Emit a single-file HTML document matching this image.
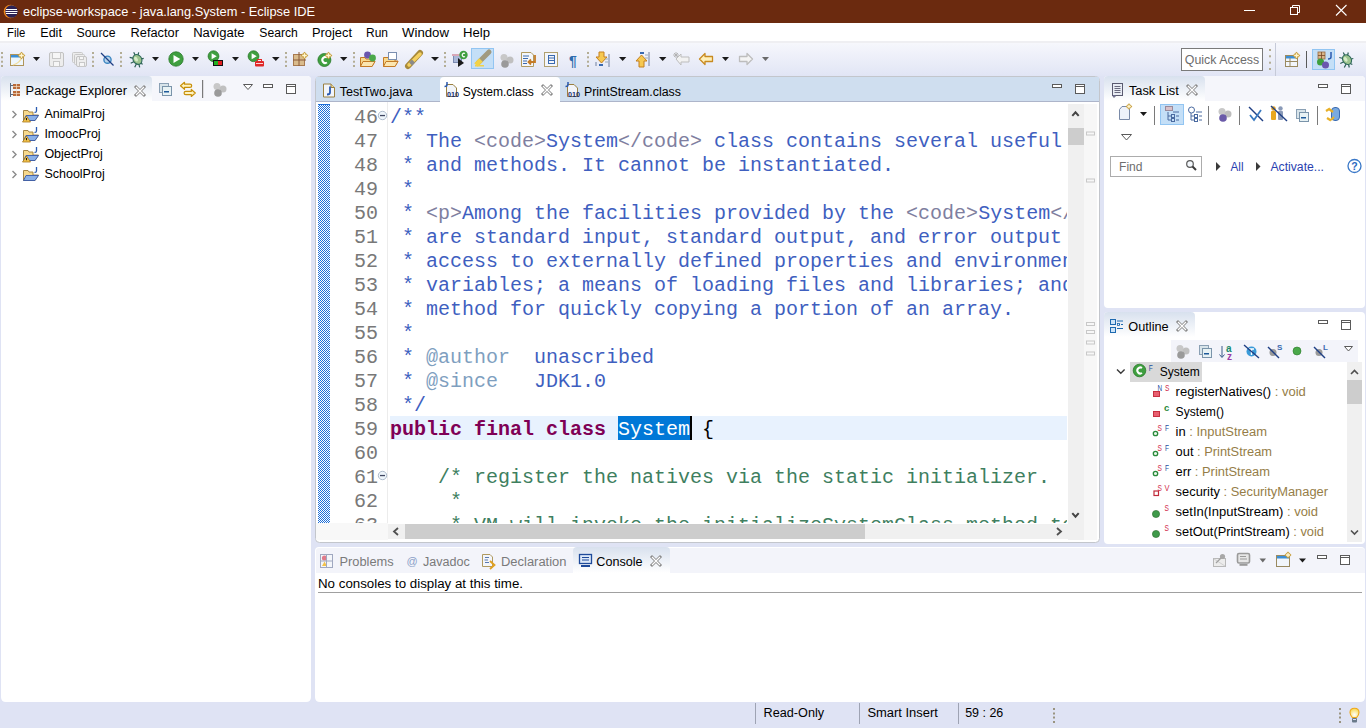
<!DOCTYPE html><html><head><meta charset="utf-8"><style>
html,body{margin:0;padding:0;width:1366px;height:728px;overflow:hidden;background:#dfe3f4}
svg text{white-space:pre}
svg{display:block;font-family:"Liberation Sans",sans-serif}
.mono{font-family:"Liberation Mono",monospace}
</style></head><body>
<svg width="1366" height="728" viewBox="0 0 1366 728" xml:space="preserve">
<defs>
<linearGradient id="tb" x1="0" y1="0" x2="0" y2="1"><stop offset="0" stop-color="#f6f7fc"/><stop offset="1" stop-color="#e1e5f5"/></linearGradient>
<linearGradient id="tabg" x1="0" y1="0" x2="0" y2="1"><stop offset="0" stop-color="#d8e1ee"/><stop offset="1" stop-color="#ffffff"/></linearGradient>
<clipPath id="edclip"><rect x="388" y="102" width="679" height="421"/></clipPath>
<clipPath id="lnclip"><rect x="316" y="102" width="72" height="421"/></clipPath>
<pattern id="chk" width="2" height="2" patternUnits="userSpaceOnUse"><rect width="2" height="2" fill="#ffffff"/><rect width="1" height="1" fill="#1e6fd9"/><rect x="1" y="1" width="1" height="1" fill="#1e6fd9"/></pattern>
</defs>

<rect x="0" y="0" width="1366" height="728" fill="#dfe3f4" />
<rect x="0" y="0" width="1366" height="23" fill="#6b2a0f" />
<text x="23" y="15.9" font-size="13.5" fill="#ffffff" textLength="292" lengthAdjust="spacingAndGlyphs" >eclipse-workspace - java.lang.System - Eclipse IDE</text>
<rect x="0" y="23" width="1366" height="18" fill="#ffffff" />
<rect x="0" y="41" width="1366" height="2" fill="#efeff2" />
<text x="7" y="37" font-size="12.5" fill="#000" textLength="18.3" lengthAdjust="spacingAndGlyphs" >File</text>
<text x="40.3" y="37" font-size="12.5" fill="#000" textLength="21.6" lengthAdjust="spacingAndGlyphs" >Edit</text>
<text x="76.5" y="37" font-size="12.5" fill="#000" textLength="39" lengthAdjust="spacingAndGlyphs" >Source</text>
<text x="130.6" y="37" font-size="12.5" fill="#000" textLength="48.3" lengthAdjust="spacingAndGlyphs" >Refactor</text>
<text x="193.2" y="37" font-size="12.5" fill="#000" textLength="51.4" lengthAdjust="spacingAndGlyphs" >Navigate</text>
<text x="259.3" y="37" font-size="12.5" fill="#000" textLength="38.5" lengthAdjust="spacingAndGlyphs" >Search</text>
<text x="312" y="37" font-size="12.5" fill="#000" textLength="40" lengthAdjust="spacingAndGlyphs" >Project</text>
<text x="366" y="37" font-size="12.5" fill="#000" textLength="22" lengthAdjust="spacingAndGlyphs" >Run</text>
<text x="402" y="37" font-size="12.5" fill="#000" textLength="47" lengthAdjust="spacingAndGlyphs" >Window</text>
<text x="463" y="37" font-size="12.5" fill="#000" textLength="27" lengthAdjust="spacingAndGlyphs" >Help</text>
<rect x="0" y="43" width="1366" height="33" fill="url(#tb)" />
<path d="M1,80 Q1,76 5,76 L307,76 Q311,76 311,80 L311,697 Q311,702 306,702 L6,702 Q1,702 1,697 Z" fill="#ffffff"/>
<path d="M1,101 L1,80 Q1,76 5,76 L307,76 Q311,76 311,80 L311,101 Z" fill="#f5f6fb"/>
<path d="M1,101 L1,80 Q1,76 5,76 L148,76 Q152,76 152,80 L152,101 Z" fill="url(#tabg)"/>
<text x="25.6" y="95" font-size="12.5" fill="#000" textLength="101.4" lengthAdjust="spacingAndGlyphs" >Package Explorer</text>
<text x="44.4" y="118" font-size="12.5" fill="#000" textLength="60.435546875" lengthAdjust="spacingAndGlyphs" >AnimalProj</text>
<text x="44.4" y="138" font-size="12.5" fill="#000" textLength="56.265625" lengthAdjust="spacingAndGlyphs" >ImoocProj</text>
<text x="44.4" y="158" font-size="12.5" fill="#000" textLength="58.353515625" lengthAdjust="spacingAndGlyphs" >ObjectProj</text>
<text x="44.4" y="178" font-size="12.5" fill="#000" textLength="60.447265625" lengthAdjust="spacingAndGlyphs" >SchoolProj</text>
<path d="M315.5,80.5 Q315.5,76.5 319.5,76.5 L1095.5,76.5 Q1099.5,76.5 1099.5,80.5 L1099.5,538.5 Q1099.5,542.5 1095.5,542.5 L319.5,542.5 Q315.5,542.5 315.5,538.5 Z" fill="#ffffff" stroke="#c3c6cc" stroke-width="1"/>
<rect x="316" y="77" width="783" height="24" fill="#cfdeef" />
<rect x="316" y="101" width="783" height="1" fill="#adb5ca" />
<path d="M440,102 L440,81 Q440,77 444,77 L556,77 Q560,77 560,81 L560,102 Z" fill="#ffffff"/>
<text x="339.8" y="96" font-size="12.5" fill="#000" textLength="72.7" lengthAdjust="spacingAndGlyphs" >TestTwo.java</text>
<text x="462.8" y="96" font-size="12.5" fill="#000" textLength="71" lengthAdjust="spacingAndGlyphs" >System.class</text>
<text x="584" y="96" font-size="12.5" fill="#000" textLength="96.9" lengthAdjust="spacingAndGlyphs" >PrintStream.class</text>
<rect x="318" y="104" width="12" height="419" fill="url(#chk)" />
<rect x="318" y="104" width="12" height="1" fill="#1e6fd9" />
<rect x="387" y="102" width="1" height="421" fill="#ececec" />
<rect x="390" y="416" width="677" height="24" fill="#e8f2fe" />
<rect x="618" y="416" width="72" height="24" fill="#0078d7" />
<rect x="690" y="416" width="2" height="24" fill="#000000" />
<g clip-path="url(#edclip)" class="mono" font-size="20" style="font-family:'Liberation Mono',monospace">
<text x="390" y="123" xml:space="preserve"><tspan fill="#3f5fbf">/**</tspan></text>
<text x="390" y="147" xml:space="preserve"><tspan fill="#3f5fbf"> * The </tspan><tspan fill="#7f7f9f">&lt;code&gt;</tspan><tspan fill="#3f5fbf">System</tspan><tspan fill="#7f7f9f">&lt;/code&gt;</tspan><tspan fill="#3f5fbf"> class contains several useful class fields</tspan></text>
<text x="390" y="171" xml:space="preserve"><tspan fill="#3f5fbf"> * and methods. It cannot be instantiated.</tspan></text>
<text x="390" y="195" xml:space="preserve"><tspan fill="#3f5fbf"> *</tspan></text>
<text x="390" y="219" xml:space="preserve"><tspan fill="#3f5fbf"> * </tspan><tspan fill="#7f7f9f">&lt;p&gt;</tspan><tspan fill="#3f5fbf">Among the facilities provided by the </tspan><tspan fill="#7f7f9f">&lt;code&gt;</tspan><tspan fill="#3f5fbf">System</tspan><tspan fill="#7f7f9f">&lt;/code&gt;</tspan><tspan fill="#3f5fbf"> class</tspan></text>
<text x="390" y="243" xml:space="preserve"><tspan fill="#3f5fbf"> * are standard input, standard output, and error output streams;</tspan></text>
<text x="390" y="267" xml:space="preserve"><tspan fill="#3f5fbf"> * access to externally defined properties and environment</tspan></text>
<text x="390" y="291" xml:space="preserve"><tspan fill="#3f5fbf"> * variables; a means of loading files and libraries; and a utility</tspan></text>
<text x="390" y="315" xml:space="preserve"><tspan fill="#3f5fbf"> * method for quickly copying a portion of an array.</tspan></text>
<text x="390" y="339" xml:space="preserve"><tspan fill="#3f5fbf"> *</tspan></text>
<text x="390" y="363" xml:space="preserve"><tspan fill="#3f5fbf"> * </tspan><tspan fill="#7f9fbf">@author</tspan><tspan fill="#3f5fbf">  unascribed</tspan></text>
<text x="390" y="387" xml:space="preserve"><tspan fill="#3f5fbf"> * </tspan><tspan fill="#7f9fbf">@since</tspan><tspan fill="#3f5fbf">   JDK1.0</tspan></text>
<text x="390" y="411" xml:space="preserve"><tspan fill="#3f5fbf"> */</tspan></text>
<text x="390" y="435" xml:space="preserve"><tspan fill="#7f0055" font-weight="bold">public final class</tspan><tspan fill="#000"> </tspan><tspan fill="#ffffff">System</tspan><tspan fill="#000"> {</tspan></text>
<text x="390" y="459" xml:space="preserve"></text>
<text x="390" y="483" xml:space="preserve"><tspan fill="#3f7f5f">    /* register the natives via the static initializer.</tspan></text>
<text x="390" y="507" xml:space="preserve"><tspan fill="#3f7f5f">     *</tspan></text>
<text x="390" y="531" xml:space="preserve"><tspan fill="#3f7f5f">     * VM will invoke the initializeSystemClass method to complete</tspan></text>
</g>
<g clip-path="url(#lnclip)" style="font-family:'Liberation Mono',monospace" font-size="20" fill="#787878">
<text x="378" y="123" text-anchor="end">46</text>
<text x="378" y="147" text-anchor="end">47</text>
<text x="378" y="171" text-anchor="end">48</text>
<text x="378" y="195" text-anchor="end">49</text>
<text x="378" y="219" text-anchor="end">50</text>
<text x="378" y="243" text-anchor="end">51</text>
<text x="378" y="267" text-anchor="end">52</text>
<text x="378" y="291" text-anchor="end">53</text>
<text x="378" y="315" text-anchor="end">54</text>
<text x="378" y="339" text-anchor="end">55</text>
<text x="378" y="363" text-anchor="end">56</text>
<text x="378" y="387" text-anchor="end">57</text>
<text x="378" y="411" text-anchor="end">58</text>
<text x="378" y="435" text-anchor="end">59</text>
<text x="378" y="459" text-anchor="end">60</text>
<text x="378" y="483" text-anchor="end">61</text>
<text x="378" y="507" text-anchor="end">62</text>
<text x="378" y="531" text-anchor="end">63</text>
</g>
<path d="M1104,80 Q1104,76 1108,76 L1361,76 Q1365,76 1365,80 L1365,304 Q1365,308 1361,308 L1108,308 Q1104,308 1104,304 Z" fill="#ffffff"/>
<path d="M1104,101 L1104,80 Q1104,76 1108,76 L1361,76 Q1365,76 1365,80 L1365,101 Z" fill="#f5f6fb"/>
<path d="M1104,101 L1104,80 Q1104,76 1108,76 L1201,76 Q1205,76 1205,80 L1205,101 Z" fill="url(#tabg)"/>
<text x="1128.9" y="95" font-size="12.5" fill="#000" textLength="49.9" lengthAdjust="spacingAndGlyphs" >Task List</text>
<path d="M1104,316 Q1104,312 1108,312 L1361,312 Q1365,312 1365,316 L1365,540 Q1365,544 1361,544 L1108,544 Q1104,544 1104,540 Z" fill="#ffffff"/>
<path d="M1104,337 L1104,316 Q1104,312 1108,312 L1191,312 Q1195,312 1195,316 L1195,337 Z" fill="url(#tabg)"/>
<text x="1128.3" y="331" font-size="12.5" fill="#000" textLength="40.4" lengthAdjust="spacingAndGlyphs" >Outline</text>
<path d="M315,551 Q315,547 319,547 L1361,547 Q1365,547 1365,551 L1365,697 Q1365,702 1360,702 L320,702 Q315,702 315,697 Z" fill="#ffffff"/>
<path d="M316,573 L316,551 Q316,548 319,548 L1362,548 Q1365,548 1365,551 L1365,573 Z" fill="#f3f4fa"/>
<path d="M573,573 L573,551 Q573,547 577,547 L666,547 Q670,547 670,551 L670,573 Z" fill="url(#tabg)"/>
<text x="339.5" y="566" font-size="12.5" fill="#7a7a7a" textLength="54.2" lengthAdjust="spacingAndGlyphs" >Problems</text>
<text x="423" y="566" font-size="12.5" fill="#7a7a7a" textLength="46.8" lengthAdjust="spacingAndGlyphs" >Javadoc</text>
<text x="501" y="566" font-size="12.5" fill="#7a7a7a" textLength="65.5" lengthAdjust="spacingAndGlyphs" >Declaration</text>
<text x="596.3" y="566" font-size="12.5" fill="#000" textLength="46.3" lengthAdjust="spacingAndGlyphs" >Console</text>
<text x="318" y="588" font-size="12.5" fill="#000" textLength="205" lengthAdjust="spacingAndGlyphs" >No consoles to display at this time.</text>
<rect x="318" y="592" width="1044" height="1" fill="#a0a0a0" />
<rect x="755" y="703" width="1" height="21" fill="#9ea3b3" />
<rect x="859" y="703" width="1" height="21" fill="#9ea3b3" />
<rect x="958" y="703" width="1" height="21" fill="#9ea3b3" />
<text x="763.6" y="717.4" font-size="12.5" fill="#000" textLength="60.5" lengthAdjust="spacingAndGlyphs" >Read-Only</text>
<text x="867.4" y="717.4" font-size="12.5" fill="#000" textLength="70.5" lengthAdjust="spacingAndGlyphs" >Smart Insert</text>
<text x="965.2" y="717.4" font-size="12.5" fill="#000" textLength="38.1" lengthAdjust="spacingAndGlyphs" >59 : 26</text>
<rect x="1" y="52.0" width="2" height="2" fill="#b3ad94" />
<rect x="1" y="56.3" width="2" height="2" fill="#b3ad94" />
<rect x="1" y="60.7" width="2" height="2" fill="#b3ad94" />
<rect x="1" y="65.0" width="2" height="2" fill="#b3ad94" />
<rect x="10.5" y="54.5" width="13" height="11" fill="#eef6fc" stroke="#b0955a"/>
<rect x="11" y="55" width="12" height="2.5" fill="#3d8fd6" />
<path d="M13,65 Q20,63 22,57" stroke="#f0dc9a" stroke-width="1.2" fill="none"/>
<path d="M21.5,51.7 L25.3,55.5 L21.5,59.3 L17.7,55.5 Z" fill="#c8a040"/>
<path d="M21.5,53.2 L21.5,57.8 M19.2,55.5 L23.8,55.5" stroke="#fff6d0" stroke-width="1.3"/>
<path d="M33,57 L40,57 L36.5,61 Z" fill="#1a1a1a"/>
<rect x="49.5" y="52.5" width="14" height="14" rx="1.5" fill="#ededed" stroke="#c2c2c2"/>
<rect x="52.5" y="52.5" width="8" height="6" fill="#f6f6f6" stroke="#c8c8c8"/>
<rect x="53.5" y="61.5" width="6" height="5" fill="#f6f6f6" stroke="#c8c8c8"/>
<rect x="72.5" y="52.5" width="10" height="10" rx="1" fill="#ededed" stroke="#c8c8c8"/>
<rect x="74.5" y="54.5" width="10" height="10" rx="1" fill="#ededed" stroke="#c8c8c8"/>
<rect x="76.5" y="56.5" width="10" height="10" rx="1.5" fill="#ededed" stroke="#c2c2c2"/><rect x="79.5" y="56.5" width="4" height="3" fill="#f6f6f6" stroke="#c8c8c8"/><rect x="79.5" y="62.5" width="5" height="4" fill="#f6f6f6" stroke="#c8c8c8"/>
<rect x="92" y="52.0" width="2" height="2" fill="#b3ad94" />
<rect x="92" y="56.3" width="2" height="2" fill="#b3ad94" />
<rect x="92" y="60.7" width="2" height="2" fill="#b3ad94" />
<rect x="92" y="65.0" width="2" height="2" fill="#b3ad94" />
<circle cx="107.5" cy="59.7" r="3.6" fill="#b8d4ea" stroke="#3c86c2" stroke-width="1.4"/>
<path d="M101,53 L113.5,65.5" stroke="#1f3f84" stroke-width="1.3"/>
<rect x="120" y="52.0" width="2" height="2" fill="#b3ad94" />
<rect x="120" y="56.3" width="2" height="2" fill="#b3ad94" />
<rect x="120" y="60.7" width="2" height="2" fill="#b3ad94" />
<rect x="120" y="65.0" width="2" height="2" fill="#b3ad94" />
<g stroke="#2b5e55" stroke-width="1.2" fill="none"><path d="M129.7,57.3 L133.7,58.3 M130.7,63.3 L134.7,61.3 M133.7,52.3 L135.7,56.3 M138.7,52.3 L137.7,56.3 M143.7,58.3 L139.7,59.3 M142.7,64.3 L138.7,62.3 M134.7,67.3 L136.7,63.3 M139.7,67.3 L138.7,63.3"/></g>
<ellipse cx="137.2" cy="59.8" rx="4.2" ry="5.2" transform="rotate(-35 136.7 59.3)" fill="#9cc48e" stroke="#2f6a5a" stroke-width="1.1"/>
<ellipse cx="136.2" cy="58.8" rx="1.6" ry="2.6" transform="rotate(-35 136.7 59.3)" fill="#d6ecc8"/>
<path d="M152,57 L159,57 L155.5,61 Z" fill="#1a1a1a"/>
<circle cx="176" cy="59" r="7.2" fill="#3f9f3f" stroke="#2a7a2a" stroke-width="0.8"/>
<path d="M173.48,55.04 L180.32,59 L173.48,62.96 Z" fill="#ffffff"/>
<path d="M192,57 L199,57 L195.5,61 Z" fill="#1a1a1a"/>
<circle cx="213.5" cy="56.2" r="5.4" fill="#3f9f3f" stroke="#2a7a2a" stroke-width="0.8"/>
<path d="M211.61,53.230000000000004 L216.74,56.2 L211.61,59.17 Z" fill="#ffffff"/>
<rect x="213" y="60" width="10" height="6" fill="#111111" />
<rect x="214" y="61" width="4" height="4" fill="#22b022" />
<rect x="218" y="61" width="4" height="4" fill="#e02020" />
<path d="M232,57 L239,57 L235.5,61 Z" fill="#1a1a1a"/>
<circle cx="253.5" cy="56.2" r="5.4" fill="#3f9f3f" stroke="#2a7a2a" stroke-width="0.8"/>
<path d="M251.61,53.230000000000004 L256.74,56.2 L251.61,59.17 Z" fill="#ffffff"/>
<rect x="255" y="61" width="9" height="5.5" rx="1" fill="#e02828"/><rect x="257.5" y="59.5" width="4" height="2" fill="none" stroke="#e02828"/>
<rect x="256" y="63" width="7" height="0.8" fill="#ffffff" />
<path d="M272,57 L279.6,57 L275.8,61 Z" fill="#1a1a1a"/>
<rect x="285" y="52.0" width="2" height="2" fill="#b3ad94" />
<rect x="285" y="56.3" width="2" height="2" fill="#b3ad94" />
<rect x="285" y="60.7" width="2" height="2" fill="#b3ad94" />
<rect x="285" y="65.0" width="2" height="2" fill="#b3ad94" />
<rect x="293.5" y="54.5" width="11" height="11" fill="#d9bb8c" stroke="#a87a50"/>
<path d="M299,52 L299,66 M293,60 L306,60" stroke="#8a5a3a" stroke-width="1"/>
<path d="M304.5,51.7 L308.3,55.5 L304.5,59.3 L300.7,55.5 Z" fill="#c8a040"/>
<path d="M304.5,53.2 L304.5,57.8 M302.2,55.5 L306.8,55.5" stroke="#fff6d0" stroke-width="1.3"/>
<circle cx="324.4" cy="60" r="6.5" fill="#3f9f3f" stroke="#2a7a2a" stroke-width="0.8"/>
<path d="M327,57.5 A3,3 0 1 0 327,62.5" stroke="#ffffff" stroke-width="2" fill="none"/>
<path d="M328.5,51.7 L332.3,55.5 L328.5,59.3 L324.7,55.5 Z" fill="#c8a040"/>
<path d="M328.5,53.2 L328.5,57.8 M326.2,55.5 L330.8,55.5" stroke="#fff6d0" stroke-width="1.3"/>
<path d="M340,57 L347.4,57 L343.7,61 Z" fill="#1a1a1a"/>
<rect x="353" y="52.0" width="2" height="2" fill="#b3ad94" />
<rect x="353" y="56.3" width="2" height="2" fill="#b3ad94" />
<rect x="353" y="60.7" width="2" height="2" fill="#b3ad94" />
<rect x="353" y="65.0" width="2" height="2" fill="#b3ad94" />
<path d="M360.5,57.5 L365,57.5 L366,59 L372,59 L372,61 L375,61 L372,66.5 L360.5,66.5 Z" fill="#f7d98e" stroke="#c47b26"/>
<path d="M363,61.5 L375,61.5 L372,66.5 L360.5,66.5 Z" fill="#fbe6b0" stroke="#c47b26"/>
<circle cx="367.5" cy="55" r="3.4" fill="#6a56ae"/><circle cx="372.5" cy="58" r="3.4" fill="#4aa84a"/>
<path d="M383.5,57.5 L388,57.5 L389,59 L395,59 L395,61 L398,61 L395,66.5 L383.5,66.5 Z" fill="#f7d98e" stroke="#c47b26"/>
<path d="M386,61.5 L398,61.5 L395,66.5 L383.5,66.5 Z" fill="#fbe6b0" stroke="#c47b26"/>
<rect x="388.5" y="52.5" width="8" height="7" fill="#ffffff" stroke="#7a8eb0"/>
<path d="M408,66 L420,53" stroke="#a88a3a" stroke-width="6" stroke-linecap="round"/>
<path d="M409,65 L420,54" stroke="#f4d060" stroke-width="3.5" stroke-linecap="round"/>
<path d="M410.5,61 L413.5,64" stroke="#8a8a8a" stroke-width="4"/>
<path d="M431,57 L439,57 L435.0,61 Z" fill="#1a1a1a"/>
<rect x="444" y="52.0" width="2" height="2" fill="#b3ad94" />
<rect x="444" y="56.3" width="2" height="2" fill="#b3ad94" />
<rect x="444" y="60.7" width="2" height="2" fill="#b3ad94" />
<rect x="444" y="65.0" width="2" height="2" fill="#b3ad94" />
<rect x="453.5" y="55.5" width="8" height="7" fill="#aab8d8" stroke="#7a8ab0"/><rect x="452" y="54" width="11" height="2" fill="#d8a8b8"/>
<path d="M458,58 L464,63 L458,67 Z" fill="#1a1a1a"/>
<circle cx="463.5" cy="55" r="4.2" fill="#3f9f3f"/><path d="M465,53.5 A1.8,1.8 0 1 0 465,56.5" stroke="#fff" stroke-width="1.2" fill="none"/>
<rect x="471.5" y="48.5" width="22" height="20" fill="#c4dff7" stroke="#92c5f2"/>
<path d="M478,63 L489,52" stroke="#a09a80" stroke-width="5" stroke-linecap="round"/>
<path d="M476,65 L481,60" stroke="#f2d248" stroke-width="5"/>
<rect x="475" y="65" width="9" height="1.5" fill="#f2d248" />
<circle cx="504" cy="57.5" r="3.5" fill="#c8c8c8"/><circle cx="510" cy="60" r="3.5" fill="#c0c0c0"/><circle cx="505" cy="64" r="3.8" fill="#9a9a9a"/>
<path d="M521.5,52.5 L531,52.5 L533.5,55 L533.5,66.5 L521.5,66.5 Z" fill="#f4f6fa" stroke="#b09a60"/>
<path d="M523,56 L529,56 M523,58.5 L528,58.5 M523,61 L527,61 M523,63.5 L527,63.5" stroke="#3a6ab0" stroke-width="1"/>
<path d="M535,55 L535,62 L529,62 M531,59.5 L528.5,62 L531,64.5" stroke="#c47b26" stroke-width="1.8" fill="none"/>
<rect x="544.5" y="52.5" width="13" height="14" fill="#f4f6fa" stroke="#b0a070"/><rect x="548.5" y="55.5" width="6" height="8" fill="none" stroke="#3a6ab0"/><path d="M549,58 L554,58 M549,60.5 L554,60.5" stroke="#3a6ab0"/>
<text x="569" y="66" font-size="14" fill="#2d6cae" font-weight="bold">¶</text>
<rect x="587" y="52.0" width="2" height="2" fill="#b3ad94" />
<rect x="587" y="56.3" width="2" height="2" fill="#b3ad94" />
<rect x="587" y="60.7" width="2" height="2" fill="#b3ad94" />
<rect x="587" y="65.0" width="2" height="2" fill="#b3ad94" />
<path d="M599,52 L604,52 L604,57 L607,57 L601.5,63 L596,57 L599,57 Z" fill="#f6c850" stroke="#c48020"/>
<path d="M596,62 L596,66 M609,54 L609,67" stroke="#7080a0" stroke-width="1"/><rect x="599" y="64" width="4" height="2" fill="#3a6ab0"/><path d="M605,59 L608,59 M605,62 L608,62" stroke="#9ab"/>
<path d="M619,57 L626.3,57 L622.65,61 Z" fill="#1a1a1a"/>
<path d="M639,67 L644,67 L644,61 L647,61 L641.5,55 L636,61 L639,61 Z" fill="#f6c850" stroke="#c48020"/>
<path d="M649,52 L649,66" stroke="#7080a0"/><rect x="640" y="52" width="4" height="2" fill="#3a6ab0"/><path d="M645,55 L648,55 M645,58 L648,58" stroke="#9ab"/>
<path d="M659,57 L666.4,57 L662.7,61 Z" fill="#1a1a1a"/>
<path d="M676,59 L681,54 L681,57 L689,57 L689,62 L681,62 L681,65 Z" fill="#f2f2f2" stroke="#bdbdbd"/>
<path d="M674,53 L678,57 M678,53 L674,57 M676,52 L676,58 M673,55 L679,55" stroke="#b0b0b0" stroke-width="0.9"/>
<path d="M699.5,59 L705,53.5 L705,56.5 L712.5,56.5 L712.5,61.5 L705,61.5 L705,64.5 Z" fill="#fff0b8" stroke="#c88a20" stroke-width="1.3" stroke-linejoin="round"/>
<path d="M722,57 L729,57 L725.5,61 Z" fill="#1a1a1a"/>
<path d="M752.5,59 L747,53.5 L747,56.5 L739.5,56.5 L739.5,61.5 L747,61.5 L747,64.5 Z" fill="#f4f4f4" stroke="#bdbdbd" stroke-width="1.3" stroke-linejoin="round"/>
<path d="M762,57 L769,57 L765.5,61 Z" fill="#6a6a6a"/>
<rect x="1181.5" y="48.5" width="81" height="22" fill="#ffffff" stroke="#7a7a7a"/>
<text x="1184.8" y="63.5" font-size="12.5" fill="#6d6d6d" textLength="74.4" lengthAdjust="spacingAndGlyphs" >Quick Access</text>
<rect x="1269" y="49.0" width="2" height="2" fill="#b3ad94" />
<rect x="1269" y="55.3" width="2" height="2" fill="#b3ad94" />
<rect x="1269" y="61.7" width="2" height="2" fill="#b3ad94" />
<rect x="1269" y="68.0" width="2" height="2" fill="#b3ad94" />
<rect x="1275" y="43" width="1" height="33" fill="#c6cad8" />
<rect x="1285.5" y="55.5" width="12" height="11" fill="#f2f6fb" stroke="#9a8a60"/><rect x="1286" y="56" width="11" height="2.5" fill="#3d8fd6"/><path d="M1290,58 L1290,66 M1286,61.5 L1297,61.5" stroke="#9a8a60"/>
<path d="M1296.5,51.7 L1300.3,55.5 L1296.5,59.3 L1292.7,55.5 Z" fill="#c8a040"/>
<path d="M1296.5,53.2 L1296.5,57.8 M1294.2,55.5 L1298.8,55.5" stroke="#fff6d0" stroke-width="1.3"/>
<rect x="1306" y="51" width="1" height="17" fill="#5a5a5a" />
<rect x="1312.5" y="49.5" width="22" height="20" fill="#c4dff7" stroke="#92c5f2"/>
<rect x="1318" y="52" width="7" height="7" fill="#d8b68a" stroke="#9a6a40" stroke-width="0.8"/><path d="M1321.5,52 L1321.5,59 M1318,55.5 L1325,55.5" stroke="#7a4a2a" stroke-width="0.8"/>
<path d="M1331,52 L1331,57 Q1331,59 1328,59" stroke="#2a5ab0" stroke-width="1.5" fill="none"/>
<circle cx="1320.5" cy="62" r="3.5" fill="#3f9f3f"/><circle cx="1325.5" cy="65" r="3.5" fill="#6a56ae"/>
<g stroke="#2b5e55" stroke-width="1.2" fill="none"><path d="M1339.3,57.5 L1343.3,58.5 M1340.3,63.5 L1344.3,61.5 M1343.3,52.5 L1345.3,56.5 M1348.3,52.5 L1347.3,56.5 M1353.3,58.5 L1349.3,59.5 M1352.3,64.5 L1348.3,62.5 M1344.3,67.5 L1346.3,63.5 M1349.3,67.5 L1348.3,63.5"/></g>
<ellipse cx="1346.8" cy="60.0" rx="4.2" ry="5.2" transform="rotate(-35 1346.3 59.5)" fill="#9cc48e" stroke="#2f6a5a" stroke-width="1.1"/>
<ellipse cx="1345.8" cy="59.0" rx="1.6" ry="2.6" transform="rotate(-35 1346.3 59.5)" fill="#d6ecc8"/>
<circle cx="10.5" cy="11.5" r="6.8" fill="#f08a1c"/><circle cx="11.5" cy="11.5" r="6.3" fill="#2c2255"/>
<path d="M6,9.5 L17,9.5 M5.5,11.5 L17.5,11.5 M6,13.5 L17,13.5" stroke="#ffffff" stroke-width="1"/>
<rect x="1244" y="10" width="11" height="1" fill="#ffffff" />
<rect x="1290.5" y="7.5" width="7" height="7" fill="none" stroke="#ffffff"/><path d="M1292.5,7.5 L1292.5,5.5 L1299.5,5.5 L1299.5,12.5 L1297.5,12.5" fill="none" stroke="#ffffff"/>
<path d="M1336,5 L1346.5,15.5 M1346.5,5 L1336,15.5" stroke="#ffffff" stroke-width="1.1"/>
<path d="M10.5,83 L10.5,97 M10.5,85.5 L13,85.5 M10.5,94.5 L13,94.5" stroke="#5a6a80" stroke-width="1" fill="none"/>
<rect x="13" y="84" width="7" height="5" fill="#b86a3a"/><rect x="13" y="91" width="7" height="5" fill="#b86a3a"/><path d="M16.5,84 L16.5,96 M13,86.5 L20,86.5 M13,93.5 L20,93.5" stroke="#f4e0c8" stroke-width="0.7"/>
<path d="M136,87 L144,95 M144,87 L136,95" stroke="#8a8a8a" stroke-width="3" stroke-linecap="square"/>
<path d="M136,87 L144,95 M144,87 L136,95" stroke="#ffffff" stroke-width="1.2"/>
<rect x="159.5" y="83.5" width="9" height="9" fill="#d8e4ea" stroke="#8aa0b4"/>
<rect x="162.5" y="86.5" width="9" height="9" fill="#e8f2f4" stroke="#7a94aa"/>
<rect x="164" y="91" width="5" height="1.5" fill="#1e5a9a" />
<path d="M180.5,85.8 L184.5,82.3 L184.5,84.2 L190,84.2 Q191.7,84.2 191.7,85.8 Q191.7,87.4 190,87.4 L184.5,87.4 L184.5,89.3 Z" fill="#fff3c0" stroke="#c8900a" stroke-width="1.2" stroke-linejoin="round"/>
<path d="M195.3,93 L191.3,89.5 L191.3,91.4 L185.8,91.4 Q184.1,91.4 184.1,93 Q184.1,94.6 185.8,94.6 L191.3,94.6 L191.3,96.5 Z" fill="#fff3c0" stroke="#c8900a" stroke-width="1.2" stroke-linejoin="round"/>
<rect x="202" y="80" width="1.2" height="18" fill="#7a7a7a" />
<circle cx="217" cy="86.5" r="3.5" fill="#c8c8c8"/><circle cx="223" cy="89" r="3.5" fill="#c0c0c0"/><circle cx="218" cy="93" r="3.8" fill="#9a9a9a"/>
<path d="M243.5,84.5 L252.5,84.5 L248,89.5 Z" fill="#fff" stroke="#5a5a5a"/>
<rect x="263.5" y="84.5" width="9" height="3" fill="#fff" stroke="#5a5a5a" stroke-width="1"/>
<rect x="286.5" y="84.5" width="9" height="9" fill="#fff" stroke="#5a5a5a" stroke-width="1"/>
<rect x="287" y="86" width="9" height="1" fill="#5a5a5a"/>
<path d="M12.5,111 L16,114.5 L12.5,118" stroke="#8a8a8a" stroke-width="1.4" fill="none"/>
<path d="M23.5,110.5 L28,110.5 L29,112 L33,112 L33,115 L38.5,115 L35,120.5 L23.5,120.5 Z" fill="#f7d98e" stroke="#9a7a3a" stroke-width="0.9"/>
<path d="M26,115.5 L38.5,115.5 L35,120.5 L23.5,120.5 Z" fill="#8ab0e8" stroke="#3a5aa8" stroke-width="0.9"/>
<path d="M36.5,107 L36.5,111 Q36.5,112.5 34.5,112.5" stroke="#2a5ab0" stroke-width="1.3" fill="none"/>
<path d="M26.5,116 L30.5,122 L22.5,122 Z" fill="#f2c24a" stroke="#a87a20" stroke-width="0.8"/><rect x="26" y="118" width="1" height="2.2" fill="#1a1a1a"/>
<path d="M12.5,131 L16,134.5 L12.5,138" stroke="#8a8a8a" stroke-width="1.4" fill="none"/>
<path d="M23.5,130.5 L28,130.5 L29,132 L33,132 L33,135 L38.5,135 L35,140.5 L23.5,140.5 Z" fill="#f7d98e" stroke="#9a7a3a" stroke-width="0.9"/>
<path d="M26,135.5 L38.5,135.5 L35,140.5 L23.5,140.5 Z" fill="#8ab0e8" stroke="#3a5aa8" stroke-width="0.9"/>
<path d="M36.5,127 L36.5,131 Q36.5,132.5 34.5,132.5" stroke="#2a5ab0" stroke-width="1.3" fill="none"/>
<path d="M26.5,136 L30.5,142 L22.5,142 Z" fill="#f2c24a" stroke="#a87a20" stroke-width="0.8"/><rect x="26" y="138" width="1" height="2.2" fill="#1a1a1a"/>
<path d="M12.5,151 L16,154.5 L12.5,158" stroke="#8a8a8a" stroke-width="1.4" fill="none"/>
<path d="M23.5,150.5 L28,150.5 L29,152 L33,152 L33,155 L38.5,155 L35,160.5 L23.5,160.5 Z" fill="#f7d98e" stroke="#9a7a3a" stroke-width="0.9"/>
<path d="M26,155.5 L38.5,155.5 L35,160.5 L23.5,160.5 Z" fill="#8ab0e8" stroke="#3a5aa8" stroke-width="0.9"/>
<path d="M36.5,147 L36.5,151 Q36.5,152.5 34.5,152.5" stroke="#2a5ab0" stroke-width="1.3" fill="none"/>
<path d="M26.5,156 L30.5,162 L22.5,162 Z" fill="#f2c24a" stroke="#a87a20" stroke-width="0.8"/><rect x="26" y="158" width="1" height="2.2" fill="#1a1a1a"/>
<path d="M12.5,171 L16,174.5 L12.5,178" stroke="#8a8a8a" stroke-width="1.4" fill="none"/>
<path d="M23.5,170.5 L28,170.5 L29,172 L33,172 L33,175 L38.5,175 L35,180.5 L23.5,180.5 Z" fill="#f7d98e" stroke="#9a7a3a" stroke-width="0.9"/>
<path d="M26,175.5 L38.5,175.5 L35,180.5 L23.5,180.5 Z" fill="#8ab0e8" stroke="#3a5aa8" stroke-width="0.9"/>
<path d="M36.5,167 L36.5,171 Q36.5,172.5 34.5,172.5" stroke="#2a5ab0" stroke-width="1.3" fill="none"/>
<path d="M323.5,84.0 L331,84.0 L334.5,87.5 L334.5,97.0 L323.5,97.0 Z" fill="#f2f5fa" stroke="#9a8040"/>
<path d="M331,84.0 L331,87.5 L334.5,87.5" fill="#e8d8a0" stroke="#9a8040"/>
<path d="M330,86.5 L330,92.5 Q330,94.5 327,94.5" stroke="#2a5ab0" stroke-width="1.8" fill="none"/>
<path d="M446.5,84.5 L453,84.5 L456.5,88 L456.5,96.5 L446.5,96.5 Z" fill="#f2f5fa" stroke="#9a8040"/>
<path d="M447,82 L447,85 Q447,86.5 444.5,86.5" stroke="#2a5ab0" stroke-width="1.5" fill="none"/>
<text x="447" y="96.5" font-size="7.5" fill="#1a3070" font-weight="bold" textLength="12" lengthAdjust="spacingAndGlyphs">010</text>
<path d="M543,86 L551,94 M551,86 L543,94" stroke="#8a8a8a" stroke-width="3" stroke-linecap="square"/>
<path d="M543,86 L551,94 M551,86 L543,94" stroke="#ffffff" stroke-width="1.2"/>
<path d="M567.5,84.5 L574,84.5 L577.5,88 L577.5,96.5 L567.5,96.5 Z" fill="#f2f5fa" stroke="#9a8040"/>
<path d="M568,82 L568,85 Q568,86.5 565.5,86.5" stroke="#2a5ab0" stroke-width="1.5" fill="none"/>
<text x="568" y="96.5" font-size="7.5" fill="#1a3070" font-weight="bold" textLength="12" lengthAdjust="spacingAndGlyphs">010</text>
<rect x="1052.5" y="84.5" width="9" height="3" fill="#fff" stroke="#5a5a5a" stroke-width="1"/>
<rect x="1075.5" y="84.5" width="9" height="9" fill="#fff" stroke="#5a5a5a" stroke-width="1"/>
<rect x="1076" y="86" width="9" height="1" fill="#5a5a5a"/>
<circle cx="382.5" cy="115.5" r="4.2" fill="#eef5fb" stroke="#aebccc" stroke-width="1"/>
<rect x="380" y="114.9" width="5" height="1.3" fill="#3f4660" />
<circle cx="382.5" cy="475.5" r="4.2" fill="#eef5fb" stroke="#aebccc" stroke-width="1"/>
<rect x="380" y="474.9" width="5" height="1.3" fill="#3f4660" />
<rect x="1068" y="104" width="16" height="436" fill="#f0f0f0" />
<rect x="1068" y="128" width="16" height="17" fill="#cdcdcd" />
<path d="M1072.3,115.8 L1075.5,112.3 L1078.7,115.8" stroke="#454545" stroke-width="2" fill="none"/>
<path d="M1072.3,513.2 L1075.5,516.7 L1078.7,513.2" stroke="#454545" stroke-width="2" fill="none"/>
<rect x="1084" y="104" width="13" height="436" fill="#f7f7f7" />
<rect x="1086.5" y="132.0" width="8" height="3" fill="none" stroke="#c8c8c8"/>
<rect x="1086.5" y="179.0" width="8" height="3" fill="none" stroke="#c8c8c8"/>
<rect x="1086.5" y="322.5" width="8" height="3" fill="none" stroke="#c8c8c8"/>
<rect x="1086.5" y="330.5" width="8" height="3" fill="none" stroke="#c8c8c8"/>
<rect x="1086.5" y="341.0" width="8" height="3" fill="none" stroke="#c8c8c8"/>
<rect x="1086.5" y="352.0" width="8" height="3" fill="none" stroke="#c8c8c8"/>
<rect x="316" y="523" width="72" height="17" fill="#f8f8f8" />
<rect x="388" y="524" width="680" height="15" fill="#f0f0f0" />
<rect x="405" y="524" width="460" height="15" fill="#cdcdcd" />
<path d="M398,528 L394,531.5 L398,535" stroke="#505050" stroke-width="1.8" fill="none"/>
<path d="M1057,528 L1061,531.5 L1057,535" stroke="#505050" stroke-width="1.8" fill="none"/>
<rect x="1112.5" y="83.5" width="10" height="12" fill="#e8ecf4" stroke="#5a5a70"/><path d="M1114.5,86.5 L1120.5,86.5 M1114.5,88.5 L1120.5,88.5 M1114.5,90.5 L1120.5,90.5 M1114.5,92.5 L1120.5,92.5" stroke="#5a5a70" stroke-width="0.9"/><path d="M1112.5,95.5 L1114,97.5 L1116,95.5" fill="#7a7aa8" stroke="#5a5a70" stroke-width="0.8"/>
<path d="M1188,86 L1196,94 M1196,86 L1188,94" stroke="#8a8a8a" stroke-width="3" stroke-linecap="square"/>
<path d="M1188,86 L1196,94 M1196,86 L1188,94" stroke="#ffffff" stroke-width="1.2"/>
<rect x="1318.5" y="84.5" width="9" height="3" fill="#fff" stroke="#5a5a5a" stroke-width="1"/>
<rect x="1341.5" y="84.5" width="9" height="9" fill="#fff" stroke="#5a5a5a" stroke-width="1"/>
<rect x="1342" y="86" width="9" height="1" fill="#5a5a5a"/>
<path d="M1119.5,109.5 L1122,106.5 L1129.5,106.5 L1129.5,119.5 L1119.5,119.5 Z" fill="#eef2fa" stroke="#7a8aa8"/>
<path d="M1129,103.2 L1132.3,106.5 L1129,109.8 L1125.7,106.5 Z" fill="#c8a040"/>
<path d="M1129,104.7 L1129,108.3 M1127.2,106.5 L1130.8,106.5" stroke="#fff6d0" stroke-width="1.3"/>
<path d="M1140,112 L1147,112 L1143.5,116 Z" fill="#1a1a1a"/>
<rect x="1154" y="106" width="1" height="19" fill="#7a7a7a" />
<rect x="1160.5" y="104.5" width="23" height="20" fill="#c4dff7" stroke="#92c5f2"/>
<path d="M1168,112 L1168,120 L1171,120 M1168,116 L1171,116" stroke="#4a6aa0" fill="none"/>
<rect x="1171.5" y="114.5" width="3" height="3" fill="none" stroke="#4a6aa0"/><rect x="1171.5" y="118.5" width="3" height="3" fill="none" stroke="#4a6aa0"/>
<path d="M1176,116 L1179,116 M1176,120 L1179,120 M1173,112 L1179,112" stroke="#4a6aa0"/>
<rect x="1165.5" y="106.5" width="7" height="4" fill="#d8c0c8" stroke="#9a8a9a"/>
<path d="M1191,112 L1191,120 L1194,120 M1191,116 L1194,116" stroke="#4a6aa0" fill="none"/>
<rect x="1194.5" y="114.5" width="3" height="3" fill="none" stroke="#4a6aa0"/><rect x="1194.5" y="118.5" width="3" height="3" fill="none" stroke="#4a6aa0"/>
<path d="M1199,116 L1202,116 M1199,120 L1202,120 M1196,112 L1202,112" stroke="#4a6aa0"/>
<circle cx="1191.5" cy="110" r="3" fill="#fff" stroke="#4a6aa0"/>
<rect x="1208" y="106" width="1" height="19" fill="#7a7a7a" />
<circle cx="1222" cy="111.5" r="3.5" fill="#c8c8c8"/><circle cx="1228" cy="114" r="3.5" fill="#bdbdbd"/><circle cx="1223" cy="118" r="3.8" fill="#6a5aa8"/>
<rect x="1239" y="106" width="1" height="19" fill="#7a7a7a" />
<path d="M1249,107 L1263,121" stroke="#1f3f84" stroke-width="1.4"/><path d="M1250,115 L1254,120 L1261,110" stroke="#3a7ac0" stroke-width="1.8" fill="none"/>
<circle cx="1273.5" cy="108.5" r="2.2" fill="#e0a020"/><rect x="1271" y="111" width="5" height="9" rx="1" fill="#e8a820"/><circle cx="1280.5" cy="108.5" r="2.2" fill="#8a9ab8"/><rect x="1278" y="111" width="5" height="9" rx="1" fill="#8a9ab8"/><path d="M1271,106 L1287,121" stroke="#1f3f84" stroke-width="1.4"/>
<rect x="1296.5" y="109.5" width="9" height="9" fill="#d8e4ea" stroke="#8aa0b4"/>
<rect x="1299.5" y="112.5" width="9" height="9" fill="#e8f2f4" stroke="#7a94aa"/>
<rect x="1301" y="117" width="5" height="1.5" fill="#1e5a9a" />
<rect x="1317" y="106" width="1" height="19" fill="#7a7a7a" />
<rect x="1331.5" y="107.5" width="8" height="13" rx="3.5" fill="#7aaae0" stroke="#3a6ab0"/><path d="M1326,111 L1330,108.5 M1329,109 L1333,112 M1327,118 L1331,120.5 M1334,117 L1331,120" stroke="#e8b028" stroke-width="2.2"/>
<path d="M1121.5,134.5 L1131.5,134.5 L1126.5,140 Z" fill="#fff" stroke="#5a5a5a"/>
<rect x="1110.5" y="156.5" width="91" height="20" fill="#ffffff" stroke="#acacac"/>
<text x="1119" y="171" font-size="12.5" fill="#6d6d6d" textLength="23.5" lengthAdjust="spacingAndGlyphs" >Find</text>
<circle cx="1190" cy="164" r="3.3" fill="#f4f8fc" stroke="#5a5a5a" stroke-width="1.2"/><path d="M1192.5,166.5 L1196,170" stroke="#3a3a3a" stroke-width="2"/>
<path d="M1216,162 L1220.5,166.5 L1216,171 Z" fill="#3a3a3a"/>
<text x="1230.5" y="171" font-size="12.5" fill="#2a3fb0" textLength="13" lengthAdjust="spacingAndGlyphs" >All</text>
<path d="M1256,162 L1260.5,166.5 L1256,171 Z" fill="#3a3a3a"/>
<text x="1270.4" y="171" font-size="12.5" fill="#2a3fb0" textLength="53.6" lengthAdjust="spacingAndGlyphs" >Activate...</text>
<circle cx="1354.5" cy="166" r="6.5" fill="#fff" stroke="#3a78c8" stroke-width="1.3"/>
<text x="1351.2" y="170.3" font-size="10.5" fill="#2a68c0" font-weight="bold">?</text>
<rect x="1110.5" y="319.5" width="5" height="5" fill="#cde4f8" stroke="#1e6ab0"/><rect x="1110.5" y="327.5" width="5" height="5" fill="#cde4f8" stroke="#1e6ab0"/>
<path d="M1117,321 L1123,321 M1119,324.5 L1120,324.5 M1121,324.5 L1123,324.5 M1117,328.5 L1123,328.5" stroke="#1e6ab0" stroke-width="1"/><rect x="1117.5" y="323.5" width="2" height="2" fill="none" stroke="#1e6ab0" stroke-width="0.8"/>
<path d="M1178,322 L1186,330 M1186,322 L1178,330" stroke="#8a8a8a" stroke-width="3" stroke-linecap="square"/>
<path d="M1178,322 L1186,330 M1186,322 L1178,330" stroke="#ffffff" stroke-width="1.2"/>
<rect x="1318.5" y="320.5" width="9" height="3" fill="#fff" stroke="#5a5a5a" stroke-width="1"/>
<rect x="1341.5" y="320.5" width="9" height="9" fill="#fff" stroke="#5a5a5a" stroke-width="1"/>
<rect x="1342" y="322" width="9" height="1" fill="#5a5a5a"/>
<rect x="1171" y="340" width="187" height="22" fill="#f3f4fa" />
<circle cx="1180" cy="348.5" r="3.5" fill="#c8c8c8"/><circle cx="1186" cy="351" r="3.5" fill="#c0c0c0"/><circle cx="1181" cy="355" r="3.8" fill="#9a9a9a"/>
<rect x="1199.5" y="345.5" width="9" height="9" fill="#d8e4ea" stroke="#8aa0b4"/>
<rect x="1202.5" y="348.5" width="9" height="9" fill="#e8f2f4" stroke="#7a94aa"/>
<rect x="1204" y="353" width="5" height="1.5" fill="#1e5a9a" />
<path d="M1222,346 L1222,357 M1219.5,354.5 L1222,357.5 L1224.5,354.5" stroke="#3a5a8a" stroke-width="1" fill="none"/>
<text x="1226" y="352" font-size="10" fill="#1a8a6a" font-weight="bold">a</text>
<text x="1227" y="360" font-size="10" fill="#9a3aa8" font-weight="bold">z</text>
<circle cx="1251.5" cy="351.5" r="5" fill="#3a9ad8"/><path d="M1249,349 L1254,349 M1251.5,349 L1251.5,355" stroke="#fff" stroke-width="1.4"/><path d="M1244,345 L1259,358" stroke="#1f3f84" stroke-width="1.4"/>
<circle cx="1273" cy="352.5" r="3.5" fill="#9a9a9a"/><path d="M1268,347 L1279,358" stroke="#1f3f84" stroke-width="1.4"/>
<text x="1277" y="350" font-size="8" fill="#3a6ab0" font-weight="bold">S</text>
<circle cx="1297" cy="351" r="4" fill="#4aa84a" stroke="#2a7a2a" stroke-width="0.6"/>
<circle cx="1319" cy="352.5" r="3.5" fill="#9a9a9a"/><path d="M1314,347 L1325,358" stroke="#1f3f84" stroke-width="1.4"/>
<text x="1323" y="350" font-size="8" fill="#3a6ab0" font-weight="bold">L</text>
<path d="M1344.5,346.5 L1352.5,346.5 L1348.5,351 Z" fill="#fff" stroke="#5a5a5a"/>
<path d="M1117,369.5 L1120.8,373.3 L1124.6,369.5" stroke="#3a3a3a" stroke-width="1.4" fill="none"/>
<rect x="1130" y="362" width="72" height="20" fill="#d9d9d9" />
<circle cx="1139.5" cy="370.5" r="6.3" fill="#3f9f3f" stroke="#2a7a2a" stroke-width="0.8"/><path d="M1142,368 A3,3 0 1 0 1142,373" stroke="#fff" stroke-width="2" fill="none"/>
<text x="1148.8" y="371" font-size="9.2" fill="#1e50a0" textLength="4" lengthAdjust="spacingAndGlyphs" >F</text>
<text x="1159.7" y="376" font-size="12.5" fill="#000" textLength="40" lengthAdjust="spacingAndGlyphs" >System</text>
<text x="1175.6" y="396" font-size="12.5" fill="#000" textLength="95.5" lengthAdjust="spacingAndGlyphs" >registerNatives()</text>
<text x="1271.1" y="396" font-size="12.5" fill="#957d47" textLength="34.7" lengthAdjust="spacingAndGlyphs" > : void</text>
<rect x="1153" y="391" width="7" height="6" fill="#e04a5a" />
<rect x="1153.5" y="391.5" width="6" height="5" fill="#e86070" stroke="#c02a3a" stroke-width="0.8"/>
<text x="1157.5" y="390.6" font-size="9.2" fill="#1e50a0" textLength="4.6" lengthAdjust="spacingAndGlyphs" >N</text>
<text x="1165" y="390.6" font-size="9.2" fill="#d02a4a" textLength="4.4" lengthAdjust="spacingAndGlyphs" >S</text>
<text x="1175.6" y="416" font-size="12.5" fill="#000" textLength="48.4" lengthAdjust="spacingAndGlyphs" >System()</text>
<rect x="1153" y="411" width="7" height="6" fill="#e04a5a" />
<rect x="1153.5" y="411.5" width="6" height="5" fill="#e86070" stroke="#c02a3a" stroke-width="0.8"/>
<text x="1164" y="410.6" font-size="9.5" fill="#2a8a3a" font-weight="bold">c</text>
<text x="1175.6" y="436" font-size="12.5" fill="#000" textLength="10.1" lengthAdjust="spacingAndGlyphs" >in</text>
<text x="1185.7" y="436" font-size="12.5" fill="#957d47" textLength="81.3" lengthAdjust="spacingAndGlyphs" > : InputStream</text>
<circle cx="1155.5" cy="433.5" r="2.2" fill="#e8f4e8" stroke="#2a8a3a" stroke-width="1.3"/>
<text x="1157.5" y="430.6" font-size="9.2" fill="#d02a4a" textLength="4.4" lengthAdjust="spacingAndGlyphs" >S</text>
<text x="1165" y="430.6" font-size="9.2" fill="#1e50a0" textLength="4" lengthAdjust="spacingAndGlyphs" >F</text>
<text x="1175.6" y="456" font-size="12.5" fill="#000" textLength="17.9" lengthAdjust="spacingAndGlyphs" >out</text>
<text x="1193.5" y="456" font-size="12.5" fill="#957d47" textLength="78.5" lengthAdjust="spacingAndGlyphs" > : PrintStream</text>
<circle cx="1155.5" cy="453.5" r="2.2" fill="#e8f4e8" stroke="#2a8a3a" stroke-width="1.3"/>
<text x="1157.5" y="450.6" font-size="9.2" fill="#d02a4a" textLength="4.4" lengthAdjust="spacingAndGlyphs" >S</text>
<text x="1165" y="450.6" font-size="9.2" fill="#1e50a0" textLength="4" lengthAdjust="spacingAndGlyphs" >F</text>
<text x="1175.6" y="476" font-size="12.5" fill="#000" textLength="15.7" lengthAdjust="spacingAndGlyphs" >err</text>
<text x="1191.3" y="476" font-size="12.5" fill="#957d47" textLength="78.7" lengthAdjust="spacingAndGlyphs" > : PrintStream</text>
<circle cx="1155.5" cy="473.5" r="2.2" fill="#e8f4e8" stroke="#2a8a3a" stroke-width="1.3"/>
<text x="1157.5" y="470.6" font-size="9.2" fill="#d02a4a" textLength="4.4" lengthAdjust="spacingAndGlyphs" >S</text>
<text x="1165" y="470.6" font-size="9.2" fill="#1e50a0" textLength="4" lengthAdjust="spacingAndGlyphs" >F</text>
<text x="1175.6" y="496" font-size="12.5" fill="#000" textLength="44.4" lengthAdjust="spacingAndGlyphs" >security</text>
<text x="1220.0" y="496" font-size="12.5" fill="#957d47" textLength="108.0" lengthAdjust="spacingAndGlyphs" > : SecurityManager</text>
<rect x="1154" y="491" width="4.5" height="4.5" fill="#fff" stroke="#c02a3a" stroke-width="1.2"/>
<text x="1157.5" y="490.6" font-size="9.2" fill="#d02a4a" textLength="4.4" lengthAdjust="spacingAndGlyphs" >S</text>
<text x="1164.5" y="490.6" font-size="9.2" fill="#d02a4a" textLength="5" lengthAdjust="spacingAndGlyphs" >V</text>
<text x="1175.6" y="516" font-size="12.5" fill="#000" textLength="107.7" lengthAdjust="spacingAndGlyphs" >setIn(InputStream)</text>
<text x="1283.3" y="516" font-size="12.5" fill="#957d47" textLength="34.7" lengthAdjust="spacingAndGlyphs" > : void</text>
<circle cx="1156" cy="514" r="3.6" fill="#3f9a4a" stroke="#2a6a2a" stroke-width="0.6"/>
<text x="1164.5" y="510.6" font-size="9.2" fill="#d02a4a" textLength="4.4" lengthAdjust="spacingAndGlyphs" >S</text>
<text x="1175.6" y="536" font-size="12.5" fill="#000" textLength="114.1" lengthAdjust="spacingAndGlyphs" >setOut(PrintStream)</text>
<text x="1289.7" y="536" font-size="12.5" fill="#957d47" textLength="34.3" lengthAdjust="spacingAndGlyphs" > : void</text>
<circle cx="1156" cy="534" r="3.6" fill="#3f9a4a" stroke="#2a6a2a" stroke-width="0.6"/>
<text x="1164.5" y="530.6" font-size="9.2" fill="#d02a4a" textLength="4.4" lengthAdjust="spacingAndGlyphs" >S</text>
<rect x="1347" y="362" width="15" height="180" fill="#f0f0f0" />
<rect x="1347" y="380" width="15" height="24" fill="#cdcdcd" />
<path d="M1351,374 L1354.5,370.5 L1358,374" stroke="#505050" stroke-width="1.6" fill="none"/>
<path d="M1351,530.5 L1354.5,534 L1358,530.5" stroke="#505050" stroke-width="1.6" fill="none"/>
<rect x="320.5" y="554.5" width="12" height="13" fill="#f4f6fa" stroke="#a0a8c0"/><circle cx="324.5" cy="558" r="2.6" fill="#e07a8a"/><path d="M322,566 L324.5,561.5 L327,566 Z" fill="#f2c24a"/><path d="M326.5,554.5 L326.5,567.5 M320.5,561 L332.5,561" stroke="#a0a8c0"/>
<text x="339.5" y="566" font-size="1" fill="#000" ></text>
<text x="406.5" y="565" font-size="11" fill="#8aa0c8" >@</text>
<path d="M482.5,554.5 L490,554.5 L492.5,557 L492.5,566.5 L482.5,566.5 Z" fill="#f4f6fa" stroke="#b09a60"/><path d="M485,557.5 L489,557.5 M484.5,560 L488,560 M485,562.5 L489,562.5" stroke="#5a7ab0"/><path d="M490,561 L494.5,565 L490,569" stroke="#e0a020" stroke-width="1.8" fill="none"/>
<rect x="579.5" y="554.5" width="12" height="9" fill="#dce8f8" stroke="#1e4a9a" stroke-width="1.3"/><path d="M582,557.5 L589,557.5 M582,560 L589,560" stroke="#1e4a9a"/><rect x="581" y="565" width="9" height="2" fill="#1e4a9a"/>
<path d="M652,557 L660,565 M660,557 L652,565" stroke="#8a8a8a" stroke-width="3" stroke-linecap="square"/>
<path d="M652,557 L660,565 M660,557 L652,565" stroke="#ffffff" stroke-width="1.2"/>
<rect x="1213.5" y="558.5" width="12" height="8" fill="#ececec" stroke="#b8b8b8"/><path d="M1214,559 L1225,566" stroke="#d0d0d0"/><path d="M1216,563 L1221,558" stroke="#a0a0a0" stroke-width="1.2"/><circle cx="1222.5" cy="556.5" r="2.6" fill="#a8a8a8"/>
<rect x="1237.5" y="553.5" width="12" height="9.5" rx="1.5" fill="#e6e6e6" stroke="#9a9a9a" stroke-width="1.6"/><path d="M1240,556.5 L1246,556.5 M1240,559 L1247,559" stroke="#9a9a9a"/><rect x="1239.5" y="564" width="8" height="1.8" fill="#9a9a9a"/>
<path d="M1259.5,558.5 L1266,558.5 L1262.75,562.5 Z" fill="#6a6a6a"/>
<rect x="1276.5" y="555.5" width="13" height="11" fill="#f2f6fb" stroke="#9a8a60"/><rect x="1277" y="556" width="12" height="2.5" fill="#3d8fd6"/>
<path d="M1288,551.5 L1291.5,555 L1288,558.5 L1284.5,555 Z" fill="#c8a040"/>
<path d="M1288,553.0 L1288,557.0 M1286.0,555 L1290.0,555" stroke="#fff6d0" stroke-width="1.3"/>
<path d="M1299,558.5 L1306,558.5 L1302.5,562.5 Z" fill="#1a1a1a"/>
<rect x="1317.5" y="555.5" width="9" height="3" fill="#fff" stroke="#5a5a5a" stroke-width="1"/>
<rect x="1340.5" y="555.5" width="9" height="9" fill="#fff" stroke="#5a5a5a" stroke-width="1"/>
<rect x="1341" y="557" width="9" height="1" fill="#5a5a5a"/>
<rect x="1053" y="708" width="2" height="2" fill="#9a9480" />
<rect x="1339" y="708" width="2" height="2" fill="#9a9480" />
<rect x="1053" y="712.5" width="2" height="2" fill="#9a9480" />
<rect x="1339" y="712.5" width="2" height="2" fill="#9a9480" />
<rect x="1053" y="716.5" width="2" height="2" fill="#9a9480" />
<rect x="1339" y="716.5" width="2" height="2" fill="#9a9480" />
<rect x="1053" y="721" width="2" height="2" fill="#9a9480" />
<rect x="1339" y="721" width="2" height="2" fill="#9a9480" />
<defs><radialGradient id="bulb" cx="0.5" cy="0.7" r="0.6"><stop offset="0" stop-color="#ffffff"/><stop offset="1" stop-color="#f8dc60"/></radialGradient></defs>
<path d="M1352.3,717.5 Q1350,714.5 1350,712.5 Q1350,708.3 1354.5,708.3 Q1359,708.3 1359,712.5 Q1359,714.5 1356.7,717.5 Z" fill="url(#bulb)" stroke="#f0a818" stroke-width="1.1"/><rect x="1352" y="718" width="5" height="4.5" rx="1" fill="#6a7a8a"/><rect x="1353" y="719" width="3" height="1" fill="#dde"/>
</svg></body></html>
